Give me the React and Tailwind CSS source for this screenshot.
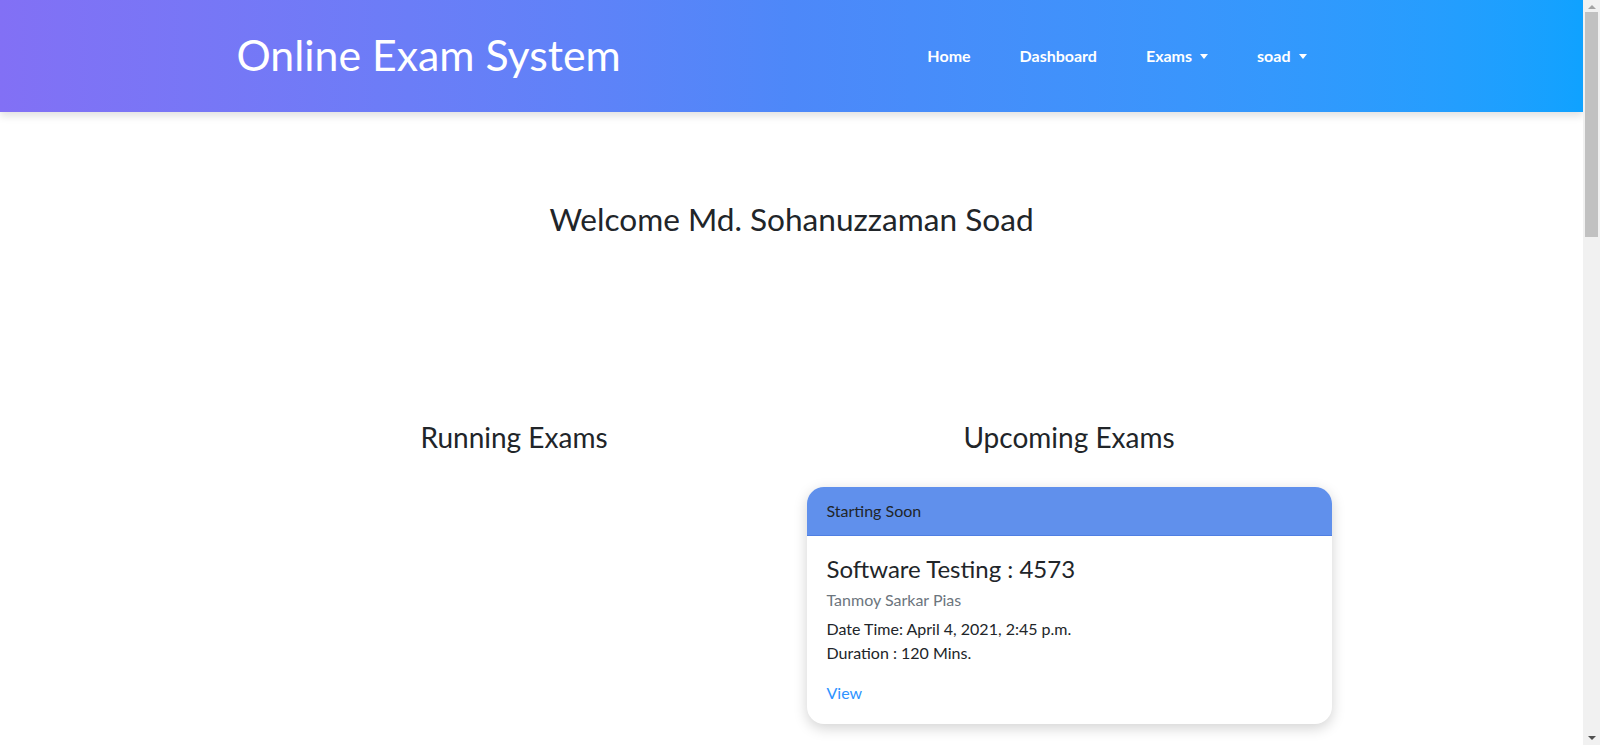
// Student dashboard: gradient navbar, welcome line, running / upcoming exam columns.

const NAV = [
  { label: 'Home' },
  { label: 'Dashboard' },
  { label: 'Exams', caret: true },
  { label: 'soad', caret: true },
]

function Caret() {
  return <span className="ml-[8px] inline-block h-0 w-0 border-x-[4.5px] border-t-[5px] border-x-transparent border-t-white align-[3px]" />
}

function Navbar() {
  return (
    <header className="h-[112px] bg-gradient-to-r from-[#8270f5] via-[#4d88f9] to-[#0fa2ff] shadow-[0_4px_8px_rgba(0,0,0,0.12)]">
      <div className="mx-auto flex h-full w-[1140px] items-center justify-between px-[15px]">
        <a className="pb-[2px] text-[42.8px] leading-none text-white">Online Exam System</a>
        <nav className="mr-[40px] flex items-center gap-[49px] text-[16px] font-bold text-white">
          {NAV.map((n) => (
            <a key={n.label} className="whitespace-nowrap">
              {n.label}
              {n.caret && <Caret />}
            </a>
          ))}
        </nav>
      </div>
    </header>
  )
}

function ExamCard() {
  return (
    <div className="overflow-hidden rounded-[17px] bg-white shadow-[0_4px_14px_rgba(0,0,0,0.18)]">
      <div className="flex h-[49px] items-center border-b border-[#4f7fe2] bg-[#6090ec] px-[20px] text-[16px] text-[#212529]">
        Starting Soon
      </div>
      <div className="px-[20px] pt-[18px] pb-[19px]">
        <h5 className="text-[24px] leading-[29px] text-[#212529]">Software Testing : 4573</h5>
        <p className="mt-[5px] text-[16px] leading-[24px] text-[#6c757d]">Tanmoy Sarkar Pias</p>
        <p className="mt-[5px] text-[16px] leading-[24px] text-[#212529]">Date Time: April 4, 2021, 2:45 p.m.</p>
        <p className="text-[16px] leading-[24px] text-[#212529]">Duration : 120 Mins.</p>
        <a className="mt-[16px] block text-[16px] leading-[24px] text-[#2e93ff]">View</a>
      </div>
    </div>
  )
}

function Scrollbar() {
  return (
    <div className="flex h-[745px] w-[17px] shrink-0 flex-col items-center bg-[#f1f1f1]">
      <div className="mt-[5px] h-0 w-0 border-x-[4px] border-b-[4px] border-x-transparent border-b-[#a3a3a3]" />
      <div className="mt-[3px] h-[225px] w-[13px] bg-[#c1c1c1]" />
      <div className="flex-1" />
      <div className="mb-[5px] h-0 w-0 border-x-[4px] border-t-[4px] border-x-transparent border-t-[#505050]" />
    </div>
  )
}

export default function App() {
  return (
    <div className="flex h-[745px] overflow-hidden bg-white font-['Lato','Open_Sans',sans-serif] text-[#212529]">
      <div className="min-w-0 flex-1">
        <Navbar />
        <main className="mx-auto w-[1140px] px-[15px]">
          <h2 className="pt-[88px] text-center text-[31.6px] leading-[38px]">Welcome Md. Sohanuzzaman Soad</h2>
          <div className="mt-[182px] grid grid-cols-2">
            <div className="px-[15px]">
              <h3 className="text-center text-[28px] leading-[34px]">Running Exams</h3>
            </div>
            <div className="px-[15px]">
              <h3 className="text-center text-[28px] leading-[34px]">Upcoming Exams</h3>
              <div className="mt-[33px]">
                <ExamCard />
              </div>
            </div>
          </div>
        </main>
      </div>
      <Scrollbar />
    </div>
  )
}
